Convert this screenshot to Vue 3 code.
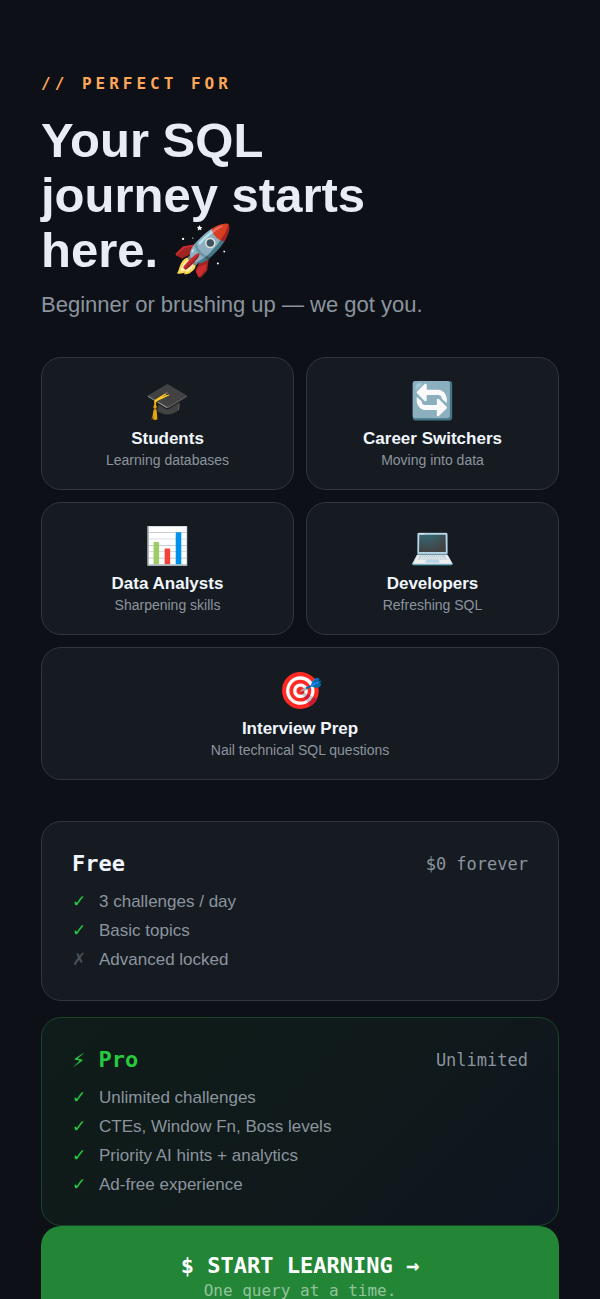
<script setup>
const audiences = [
  { icon: '🎓', title: 'Students', text: 'Learning databases' },
  { icon: '🔄', title: 'Career Switchers', text: 'Moving into data' },
  { icon: '📊', title: 'Data Analysts', text: 'Sharpening skills' },
  { icon: '💻', title: 'Developers', text: 'Refreshing SQL' },
  { icon: '🎯', title: 'Interview Prep', text: 'Nail technical SQL questions', wide: true }
]
const plans = [
  {
    name: 'Free',
    price: '$0 forever',
    items: [
      { text: '3 challenges / day', ok: true },
      { text: 'Basic topics', ok: true },
      { text: 'Advanced locked', ok: false }
    ]
  },
  {
    name: '⚡ Pro',
    price: 'Unlimited',
    pro: true,
    items: [
      { text: 'Unlimited challenges', ok: true },
      { text: 'CTEs, Window Fn, Boss levels', ok: true },
      { text: 'Priority AI hints + analytics', ok: true },
      { text: 'Ad-free experience', ok: true }
    ]
  }
]
</script>

<template>
  <main class="page">
    <header>
      <p class="eyebrow">// PERFECT FOR</p>
      <h1>Your SQL<br />journey starts<br />here. 🚀</h1>
      <p class="lead">Beginner or brushing up — we got you.</p>
    </header>
    <section class="grid">
      <article v-for="a in audiences" :key="a.title" class="card" :class="{ wide: a.wide }">
        <div class="emoji">{{ a.icon }}</div>
        <h2>{{ a.title }}</h2>
        <p>{{ a.text }}</p>
      </article>
    </section>
    <section class="plans">
      <article v-for="p in plans" :key="p.name" class="plan" :class="{ pro: p.pro }">
        <div class="plan-head">
          <h2>{{ p.name }}</h2>
          <span>{{ p.price }}</span>
        </div>
        <ul>
          <li v-for="i in p.items" :key="i.text">
            <span class="mark" :class="{ off: !i.ok }">{{ i.ok ? '✓' : '✗' }}</span>{{ i.text }}
          </li>
        </ul>
      </article>
    </section>
    <button class="cta" type="button">
      <span class="cta-title">$ START LEARNING →</span>
      <span class="cta-sub">One query at a time.</span>
    </button>
  </main>
</template>

<style>
html,
body {
  margin: 0;
  background: #0d1117;
}
</style>

<style scoped>
* {
  box-sizing: border-box;
}
h1, h2, p, ul {
  margin: 0;
  padding: 0;
}
.page {
  height: 100vh;
  overflow-y: auto;
  scrollbar-width: none;
  display: flex;
  flex-direction: column;
  padding: 74px 41px 0;
  background: #0d1117;
  color: #f0f6fc;
  font-family: "Liberation Sans", Arial, sans-serif;
}
.page > * {
  flex-shrink: 0;
}
.eyebrow {
  font: bold 16px/20px "DejaVu Sans Mono", monospace;
  letter-spacing: 4px;
  color: #ffa657;
}
h1 {
  margin-top: 19px;
  font-size: 49px;
  line-height: 55px;
  color: #e8edf5;
}
.lead {
  margin-top: 14px;
  font-size: 22px;
  line-height: 26px;
  color: #8b949e;
}
.grid {
  display: grid;
  grid-template-columns: 1fr 1fr;
  gap: 12px;
  margin-top: 39px;
}
.card {
  padding: 19px 12px;
  border: 1px solid #30363d;
  border-radius: 20px;
  background: #161b22;
  text-align: center;
}
.wide {
  grid-column: 1 / -1;
}
.emoji {
  font-size: 36px;
  line-height: 48px;
}
.card h2 {
  margin-top: 3px;
  font-size: 17px;
  line-height: 22px;
}
.card p {
  font-size: 14px;
  line-height: 20px;
  color: #8b949e;
}
.plans {
  display: grid;
  gap: 16px;
  margin-top: 41px;
}
.plan {
  padding: 28px 30px 26px;
  border: 1px solid #30363d;
  border-radius: 20px;
  background: #161b22;
}
.plan-head {
  display: flex;
  justify-content: space-between;
  align-items: center;
  font-family: "DejaVu Sans Mono", monospace;
}
.plan-head h2 {
  font-size: 22px;
  line-height: 28px;
}
.plan-head span {
  font-size: 17px;
  color: #8b949e;
}
.plan ul {
  margin-top: 9px;
  list-style: none;
}
.plan li {
  display: flex;
  gap: 12px;
  font-size: 17px;
  line-height: 29px;
  color: #8b949e;
}
.mark {
  width: 15px;
  color: #27c93f;
}
.off {
  color: #484f58;
}
.pro {
  border-color: #1a4628;
  background: linear-gradient(135deg, #0f1c19, #10191b 60%, #0e1520);
}
.pro h2 {
  color: #27c93f;
}
.cta {
  display: flex;
  flex-direction: column;
  align-items: center;
  padding: 26px 20px;
  border: 0;
  border-radius: 20px;
  background: #238636;
  color: #fff;
  font-family: "DejaVu Sans Mono", monospace;
}
.cta-title {
  font-size: 22px;
  line-height: 28px;
  font-weight: bold;
}
.cta-sub {
  font-size: 16px;
  line-height: 22px;
  color: #91c39b;
}
</style>
